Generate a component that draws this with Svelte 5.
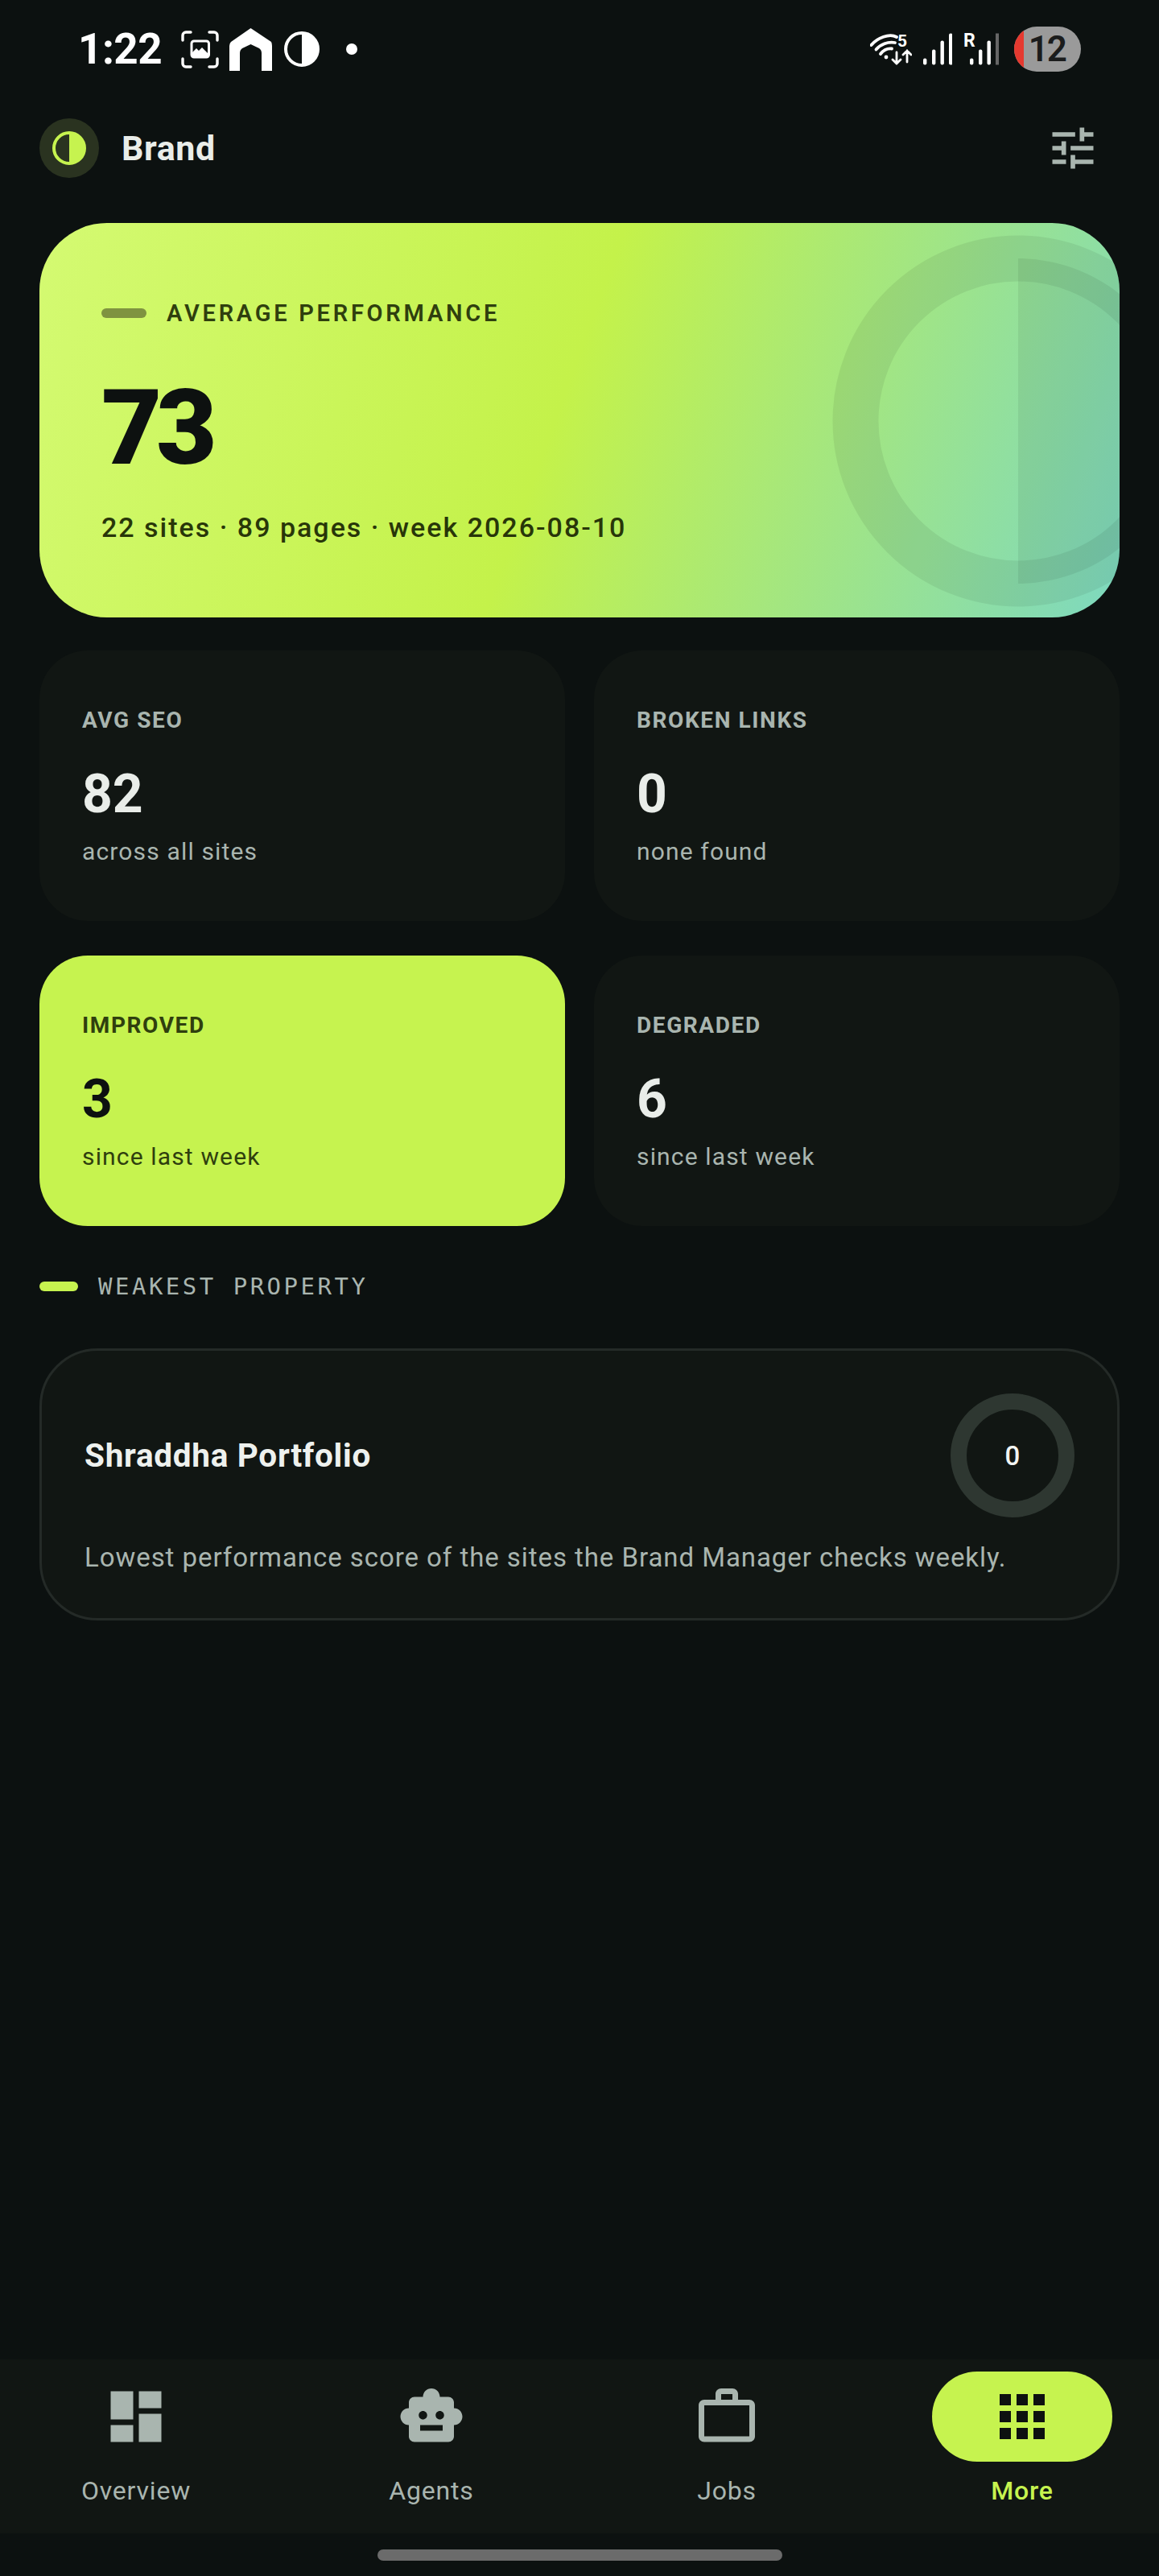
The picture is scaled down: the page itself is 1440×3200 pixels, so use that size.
<script>
  const stats = [
    { label: 'AVG SEO', value: '82', sub: 'across all sites' },
    { label: 'BROKEN LINKS', value: '0', sub: 'none found' },
    { label: 'IMPROVED', value: '3', sub: 'since last week', lime: true },
    { label: 'DEGRADED', value: '6', sub: 'since last week' }
  ];
  const tabs = [
    { label: 'Overview', d: 'M3 13h8V3H3v10zm0 8h8v-6H3v6zm10 0h8V11h-8v10zm0-18v6h8V3h-8z' },
    { label: 'Agents', d: 'M20 9V7c0-1.1-.9-2-2-2h-3c0-1.66-1.34-3-3-3S9 3.34 9 5H6c-1.1 0-2 .9-2 2v2c-1.66 0-3 1.34-3 3s1.34 3 3 3v4c0 1.1.9 2 2 2h12c1.1 0 2-.9 2-2v-4c1.66 0 3-1.34 3-3s-1.34-3-3-3zM7.5 11.5c0-.83.67-1.5 1.5-1.5s1.5.67 1.5 1.5S9.83 13 9 13s-1.5-.67-1.5-1.5zM16 17H8v-2h8v2zm-1-4c-.83 0-1.5-.67-1.5-1.5S14.17 10 15 10s1.5.67 1.5 1.5S15.83 13 15 13z' },
    { label: 'Jobs', d: 'M14 6V4h-4v2h4zM4 8v11h16V8H4zm16-2c1.11 0 2 .89 2 2v11c0 1.11-.89 2-2 2H4c-1.11 0-2-.89-2-2l.01-11c0-1.11.88-2 1.99-2h4V4c0-1.11.89-2 2-2h4c1.11 0 2 .89 2 2v2h4z' },
    { label: 'More', active: true, d: 'M4 8h4V4H4v4zm6 12h4v-4h-4v4zm-6 0h4v-4H4v4zm0-6h4v-4H4v4zm6 0h4v-4h-4v4zm6-10v4h4V4h-4zm-6 4h4V4h-4v4zm6 6h4v-4h-4v4zm0 6h4v-4h-4v4z' }
  ];
  const bars = [
    { x: 0, h: 8 }, { x: 11, h: 19 }, { x: 21.5, h: 30 }, { x: 32, h: 39 }
  ];
</script>

<div class="page">
  <div class="status">
    <div class="status-left">
      <span class="time">1:22</span>
      <svg class="s-shot" width="47" height="47" viewBox="0 0 47 47" fill="none">
        <path d="M2 12V6a4 4 0 0 1 4-4h6M35 2h6a4 4 0 0 1 4 4v6M45 35v6a4 4 0 0 1-4 4h-6M12 45H6a4 4 0 0 1-4-4v-6" stroke="#fff" stroke-width="3.4" stroke-linecap="round"/>
        <rect x="13" y="13" width="21.5" height="20" rx="3" stroke="#fff" stroke-width="3"/>
        <path d="M14 32V27l5-5 3 3 4-4 7 7v4z" fill="#fff"/>
      </svg>
      <svg class="s-home" width="53" height="53" viewBox="0 0 53 53">
        <path d="M26.5 0 52 17Q53 19 53 22V53H40V31Q40 27 37 25L26.5 20 16 25Q13 27 13 31V53H0V22Q0 19 2 17Z" fill="#fff"/>
      </svg>
      <svg class="s-half" width="44" height="44" viewBox="0 0 44 44">
        <circle cx="22" cy="22" r="20" fill="none" stroke="#fff" stroke-width="4"/>
        <path d="M22 2a20 20 0 0 1 0 40z" fill="#fff"/>
      </svg>
      <span class="s-dot"></span>
    </div>
    <div class="status-right">
      <div class="wifi">
        <svg width="52" height="39" viewBox="0 0 52 39" fill="none" stroke="#fff" stroke-linecap="round">
          <path d="M1.5 14C9 5 24 -1 33 4" stroke-width="3.8"/>
          <path d="M7.5 19.5C13 13 22 9.5 31 11" stroke-width="3.8"/>
          <path d="M13 25C16.5 20.5 22 18 27 18.5" stroke-width="3.8"/>
          <circle cx="20" cy="29" r="2.4" fill="#fff" stroke="none"/>
          <path d="M33 23V37M28 32l5 5 5-5M46 35V21M41 26l5-5 5 5" stroke-width="2.8"/>
        </svg>
        <span class="wifi-5">5</span>
      </div>
      <svg class="sig" width="36" height="40" viewBox="0 0 36 40">
        {#each bars as b}
          <rect x={b.x} y={39.5 - b.h} width="4.4" height={b.h} rx="2" fill="#fff"/>
        {/each}
      </svg>
      <div class="sig-r">
        <span class="r">R</span>
        <svg width="36" height="40" viewBox="0 0 36 40">
          {#each bars as b, i}
            <rect x={b.x} y={39.5 - b.h} width="4.4" height={b.h} rx={i === 3 ? 0 : 2} fill={i === 3 ? '#666' : '#fff'}/>
          {/each}
        </svg>
      </div>
      <div class="battery"><span class="b-red"></span><span class="b-num">12</span></div>
    </div>
  </div>

  <header class="head">
    <div class="brand">
      <span class="logo">
        <svg width="42" height="42" viewBox="0 0 42 42">
          <circle cx="21" cy="21" r="19" fill="none" stroke="#c6f34f" stroke-width="4"/>
          <path d="M21 2a19 19 0 0 1 0 38z" fill="#c6f34f"/>
        </svg>
      </span>
      <span class="brand-name">Brand</span>
    </div>
    <svg class="tune" width="68" height="68" viewBox="0 0 24 24" fill="#a9b5af">
      <path d="M3 17v2h6v-2H3zM3 5v2h10V5H3zm10 16v-2h8v-2h-8v-2h-2v6h2zM7 9v2H3v2h4v2h2V9H7zm14 4v-2H11v2h10zm-6-4h2V7h4V5h-4V3h-2v6z"/>
    </svg>
  </header>

  <main class="main">
    <section class="hero">
      <svg class="hero-mark" width="462" height="462" viewBox="0 0 462 462">
        <circle cx="231" cy="231" r="202" fill="none" stroke="#000" stroke-opacity="0.065" stroke-width="57"/>
        <path d="M231 29a202 202 0 0 1 0 404z" fill="#000" fill-opacity="0.065"/>
      </svg>
      <div class="hero-label"><span class="hero-bar"></span><span class="hero-title">AVERAGE PERFORMANCE</span></div>
      <div class="hero-value">73</div>
      <div class="hero-sub">22 sites · 89 pages · week 2026-08-10</div>
    </section>

    <section class="grid">
      {#each stats as s}
        <div class="stat" class:lime={s.lime}>
          <div class="stat-label">{s.label}</div>
          <div class="stat-value">{s.value}</div>
          <div class="stat-sub">{s.sub}</div>
        </div>
      {/each}
    </section>

    <div class="section-label"><span class="section-bar"></span><span class="section-text">WEAKEST PROPERTY</span></div>

    <section class="weak">
      <div class="weak-top">
        <div class="weak-title">Shraddha Portfolio</div>
        <div class="ring">0</div>
      </div>
      <p class="weak-desc">Lowest performance score of the sites the Brand Manager checks weekly.</p>
    </section>
  </main>

  <nav class="nav">
    {#each tabs as t}
      <div class="tab" class:active={t.active}>
        <span class="tab-icon">
          <svg width="84" height="84" viewBox="0 0 24 24"><path d={t.d}/></svg>
        </span>
        <span class="tab-label">{t.label}</span>
      </div>
    {/each}
  </nav>
  <div class="home-area"><span class="home-bar"></span></div>
</div>

<style>
  :global(body) { margin: 0; background: #0c1110; }
  .page {
    width: 1440px; height: 3200px; display: flex; flex-direction: column;
    background: #0c1110; font-family: Roboto, "Liberation Sans", sans-serif; overflow: hidden;
  }

  .status {
    height: 120px; padding: 2px 97px 0; box-sizing: border-box;
    display: flex; align-items: center; justify-content: space-between; flex: none;
  }
  .status-left, .status-right { display: flex; align-items: center; }
  .time { font-size: 53px; font-weight: 700; color: #fff; line-height: 60px; width: 104px; white-space: nowrap; letter-spacing: -0.5px; }
  .s-shot { margin-left: 24px; }
  .s-home { margin-left: 13px; }
  .s-half { margin-left: 15px; }
  .s-dot { width: 14px; height: 14px; border-radius: 50%; background: #fff; margin-left: 33px; }
  .wifi { position: relative; width: 52px; height: 39px; }
  .wifi svg { display: block; }
  .wifi-5 { position: absolute; left: 34px; top: -2px; font-size: 21px; font-weight: 700; color: #fff; line-height: 22px; }
  .sig { margin-left: 14px; }
  .sig-r { position: relative; margin-left: 14px; width: 42px; display: flex; justify-content: flex-end; }
  .r { position: absolute; left: 0; top: -2px; font-size: 23px; font-weight: 700; color: #fff; line-height: 24px; }
  .sig-r svg { margin-right: -2px; margin-left: 8px; }
  .battery {
    position: relative; width: 83px; height: 56px; border-radius: 28px; background: #9a9a9a; overflow: hidden;
    margin-left: 21px; display: flex; align-items: center; justify-content: flex-end; padding-right: 19px; box-sizing: border-box;
  }
  .b-red { position: absolute; left: 0; top: 0; bottom: 0; width: 12px; background: #e5392f; }
  .b-num { font-size: 44px; font-weight: 600; color: #1b1c1c; letter-spacing: -2px; line-height: 56px; }

  .head {
    height: 127px; flex: none; display: flex; align-items: center; justify-content: space-between;
    padding: 0 73px 0 49px; box-sizing: border-box; margin-bottom: 30px;
  }
  .brand { display: flex; align-items: center; gap: 28px; }
  .logo { width: 74px; height: 74px; border-radius: 50%; background: #2a3320; display: flex; align-items: center; justify-content: center; }
  .brand-name { font-size: 43px; font-weight: 700; letter-spacing: 0.6px; color: #e9ede9; line-height: 50px; }
  .tune { display: block; }

  .main { flex: 1; padding: 0 49px; display: flex; flex-direction: column; }

  .hero {
    position: relative; height: 490px; box-sizing: border-box; flex: none; overflow: hidden; border-radius: 84px;
    padding: 95px 77px 0;
    background: linear-gradient(110deg, #d4fa72 0%, #c4f24a 48%, #7dd8c0 100%);
  }
  .hero-mark { position: absolute; left: 985px; top: 15px; }
  .hero-label { display: flex; align-items: center; gap: 25px; height: 34px; }
  .hero-bar { width: 56px; height: 12px; border-radius: 6px; background: #7f9340; }
  .hero-title { font-size: 29px; font-weight: 600; letter-spacing: 3.75px; color: #2f3f0e; line-height: 34px; }
  .hero-value { margin-top: 60px; font-size: 130px; font-weight: 900; line-height: 132px; letter-spacing: -7px; color: #0d1110; }
  .hero-sub { margin-top: 36px; font-size: 34px; font-weight: 500; letter-spacing: 2px; line-height: 42px; color: #283609; }

  .grid { display: grid; grid-template-columns: 1fr 1fr; gap: 43px 36px; margin-top: 41px; }
  .stat {
    height: 336px; box-sizing: border-box; padding: 69px 53px 0; border-radius: 60px; background: #111613;
  }
  .stat-label { font-size: 28px; font-weight: 700; letter-spacing: 1.6px; line-height: 36px; color: #a9b5af; }
  .stat-value { margin-top: 38px; font-size: 66px; font-weight: 700; line-height: 72px; color: #e9ede9; }
  .stat-sub { margin-top: 14px; font-size: 30px; letter-spacing: 1.15px; line-height: 42px; color: #a9b5af; }
  .lime { background: #c6f34f; }
  .lime .stat-label, .lime .stat-sub { color: #2f3f0e; }
  .lime .stat-value { color: #0d1110; }

  .section-label { display: flex; align-items: center; gap: 25px; height: 34px; margin-top: 58px; }
  .section-bar { width: 48px; height: 12px; border-radius: 6px; background: #c6f34f; }
  .section-text { font-family: "DejaVu Sans Mono", "Liberation Mono", monospace; font-size: 29px; letter-spacing: 3.5px; color: #a9b5af; line-height: 34px; }

  .weak {
    margin-top: 60px; height: 338px; box-sizing: border-box; padding: 53px; flex: none;
    background: #111613; border: 3px solid #242a27; border-radius: 72px;
  }
  .weak-top { display: flex; align-items: center; justify-content: space-between; }
  .weak-title { font-size: 40.5px; font-weight: 700; letter-spacing: 0.7px; color: #eef1ee; line-height: 50px; }
  .ring {
    width: 154px; height: 154px; box-sizing: border-box; border: 20px solid #2e3731; border-radius: 50%;
    display: flex; align-items: center; justify-content: center; font-size: 33px; font-weight: 500; color: #f2f4f2;
  }
  .weak-desc { margin: 29px 0 0; font-size: 33px; letter-spacing: 0.94px; line-height: 42px; color: #a9b5af; white-space: nowrap; }

  .nav {
    height: 216px; flex: none; background: #111613; box-sizing: border-box; padding: 15px 58px 0 57px;
    display: flex; justify-content: space-between;
  }
  .tab { width: 224px; display: flex; flex-direction: column; align-items: center; }
  .tab-icon { width: 224px; height: 112px; border-radius: 56px; display: flex; align-items: center; justify-content: center; fill: #a9b5af; }
  .active .tab-icon { background: #c6f34f; fill: #0d1110; }
  .tab-label { margin-top: 14px; font-size: 32px; font-weight: 400; letter-spacing: 0.8px; line-height: 44px; color: #a9b5af; }
  .active .tab-label { color: #c6f34f; font-weight: 500; }

  .home-area { flex: none; height: 53px; display: flex; justify-content: center; padding-top: 20px; box-sizing: border-box; }
  .home-bar { width: 503px; height: 14px; border-radius: 7px; background: #6b6b6b; }
</style>
